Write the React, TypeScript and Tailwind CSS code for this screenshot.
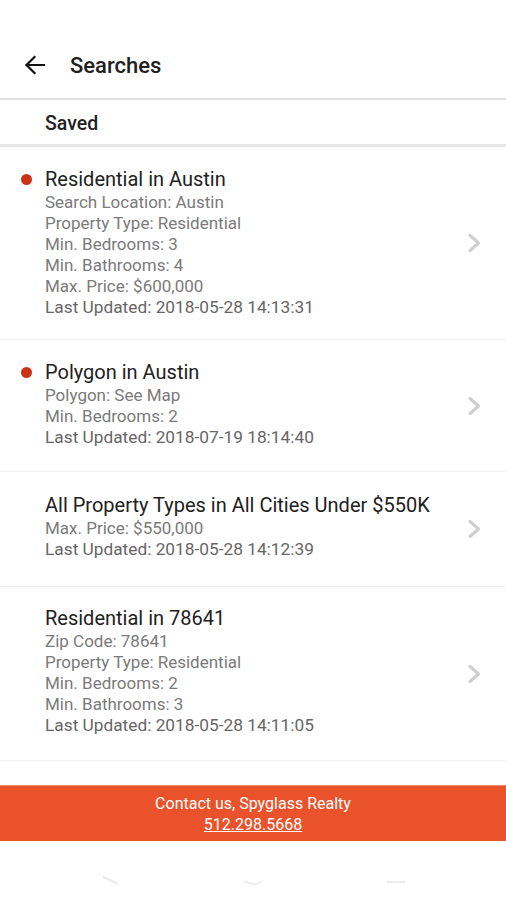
import React from "react";

type Item = { title: string; dot: boolean; lines: string[]; updated: string; pad: string };

const items: Item[] = [
  {
    title: "Residential in Austin",
    dot: true,
    lines: ["Search Location: Austin", "Property Type: Residential", "Min. Bedrooms: 3", "Min. Bathrooms: 4", "Max. Price: $600,000"],
    updated: "Last Updated: 2018-05-28 14:13:31",
    pad: "pt-[20px] pb-[21px]",
  },
  {
    title: "Polygon in Austin",
    dot: true,
    lines: ["Polygon: See Map", "Min. Bedrooms: 2"],
    updated: "Last Updated: 2018-07-19 18:14:40",
    pad: "pt-[20px] pb-[23px]",
  },
  {
    title: "All Property Types in All Cities Under $550K",
    dot: false,
    lines: ["Max. Price: $550,000"],
    updated: "Last Updated: 2018-05-28 14:12:39",
    pad: "pt-[21px] pb-[26px]",
  },
  {
    title: "Residential in 78641",
    dot: false,
    lines: ["Zip Code: 78641", "Property Type: Residential", "Min. Bedrooms: 2", "Min. Bathrooms: 3"],
    updated: "Last Updated: 2018-05-28 14:11:05",
    pad: "pt-[19px] pb-[24px]",
  },
];

function Chevron() {
  return (
    <svg width="18" height="20" viewBox="0 0 18 20" fill="none">
      <path d="M4 2.5 L12.5 10 L4 17.5" stroke="#cfcfcf" strokeWidth="3.2" strokeLinecap="round" strokeLinejoin="round" />
    </svg>
  );
}

export default function App() {
  return (
    <div className="w-[506px] h-[900px] bg-white flex flex-col overflow-hidden" style={{ fontFamily: "Roboto, 'Liberation Sans', sans-serif" }}>
      {/* Header */}
      <div className="h-[98px] flex items-center pt-[32px] pl-[23px] shrink-0">
        <svg width="24" height="24" viewBox="0 0 24 24" fill="none">
          <path d="M21 12 H3.5 M11.5 4 L3.5 12 L11.5 20" stroke="#111" strokeWidth="2.2" strokeLinecap="square" />
        </svg>
        <span className="ml-[23px] text-[22px] font-medium text-[#212121]">Searches</span>
      </div>
      <div className="h-[2px] bg-[#e2e2e2] shrink-0" />
      <div className="h-[44px] flex items-center pt-[3px] pl-[45px] text-[19.5px] font-medium text-[#222] shrink-0">Saved</div>
      <div className="h-[3px] bg-[#e6e6e6] shrink-0" />

      {/* List */}
      <div className="flex flex-col shrink-0">
        {items.map((it, i) => (
          <div key={i} className="flex items-center pr-[22px] border-b border-[#f3f3f3]">
            <div className={`flex-1 flex ${it.pad}`}>
              <div className="w-[45px] shrink-0 flex justify-center">
                {it.dot && <div className="mt-[7px] ml-[8px] w-[11px] h-[11px] rounded-full bg-[#cc3316]" />}
              </div>
              <div className="flex flex-col">
                <div className="text-[20px] leading-[25px] text-[#212121]">{it.title}</div>
                {it.lines.map((l, j) => (
                  <div key={j} className="text-[17px] leading-[21px] text-[#7a7a7a]">{l}</div>
                ))}
                <div className="text-[17.3px] leading-[21px] text-[#666]">{it.updated}</div>
              </div>
            </div>
            <Chevron />
          </div>
        ))}
      </div>

      <div className="h-[24px] shrink-0" />
      {/* Footer contact bar */}
      <div className="h-[56px] bg-[#e9522a] border-t border-[#f28a6a] flex flex-col items-center justify-center text-white text-[16px] leading-[21px] shrink-0">
        <div>Contact us, Spyglass Realty</div>
        <div className="underline">512.298.5668</div>
      </div>

      {/* Bottom nav (faint) */}
      <div className="flex-1 relative">
        <svg className="absolute left-0 top-0" width="506" height="60" viewBox="0 0 506 60" fill="none">
          <path d="M103 36 L118 43" stroke="#ececec" strokeWidth="2" />
          <path d="M244 40 Q253 46 262 40" stroke="#ececec" strokeWidth="2" />
          <path d="M387 41 H405" stroke="#ececec" strokeWidth="2" />
        </svg>
      </div>
    </div>
  );
}
